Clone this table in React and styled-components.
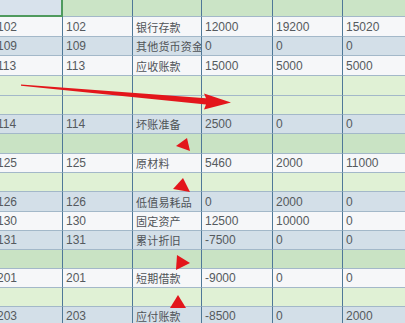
import React from "react";
import styled, { createGlobalStyle } from "styled-components";

const GlobalStyle = createGlobalStyle`
  html, body {
    margin: 0;
    padding: 0;
    background: #ffffff;
    overflow: hidden;
  }
  body {
    font-family: "Liberation Sans", "Noto Sans CJK SC", sans-serif;
  }
`;

const rowColors = {
  head: "#cbe4c6",
  white: "#f6f7f9",
  blue: "#d3dfe8",
  green: "#c9e3c4",
  lime: "#e0f1d5",
};

const Stage = styled.div`
  position: relative;
  width: 405px;
  height: 323px;
  overflow: hidden;
`;

const Sheet = styled.div`
  display: flex;
  flex-direction: column;
  margin-left: -6px;
`;

const Row = styled.div`
  display: grid;
  grid-template-columns: 69px 70px 69px 71px 70px 70px;
  height: ${({ h }) => h}px;
  background: ${({ tone }) => rowColors[tone]};
`;

const Cell = styled.div`
  box-sizing: border-box;
  border-right: 1px solid #4f7898;
  border-bottom: 1px solid #a3b8c9;
  padding-left: ${({ first }) => (first ? "3px" : "3px")};
  display: flex;
  align-items: center;
  font-size: 12px;
  color: #555a5e;
  white-space: nowrap;
  overflow: hidden;
`;

const Name = styled.span`
  font-family: "Noto Sans CJK SC", sans-serif;
  font-size: 11px;
  color: #4f5357;
  letter-spacing: 0.2px;
`;

const Picked = styled(Cell)`
  background: #d8e2ec;
  border-right: 2px solid #4f9a5e;
  border-bottom: 2px solid #4f9a5e;
`;

const Overlay = styled.svg`
  position: absolute;
  left: 0;
  top: 0;
  pointer-events: none;
`;

const rows = [
  { h: 17, tone: "head", head: true },
  { h: 20, tone: "white", d: ["102", "102", "银行存款", "12000", "19200", "15020"] },
  { h: 19, tone: "blue", d: ["109", "109", "其他货币资金", "0", "0", "0"] },
  { h: 20, tone: "white", d: ["113", "113", "应收账款", "15000", "5000", "5000"] },
  { h: 20, tone: "lime" },
  { h: 19, tone: "lime" },
  { h: 19, tone: "blue", d: ["114", "114", "坏账准备", "2500", "0", "0"] },
  { h: 20, tone: "green" },
  { h: 19, tone: "white", d: ["125", "125", "原材料", "5460", "2000", "11000"] },
  { h: 19, tone: "lime" },
  { h: 20, tone: "blue", d: ["126", "126", "低值易耗品", "0", "2000", "0"] },
  { h: 19, tone: "white", d: ["130", "130", "固定资产", "12500", "10000", "0"] },
  { h: 19, tone: "blue", d: ["131", "131", "累计折旧", "-7500", "0", "0"] },
  { h: 19, tone: "green" },
  { h: 19, tone: "white", d: ["201", "201", "短期借款", "-9000", "0", "0"] },
  { h: 19, tone: "lime" },
  { h: 19, tone: "blue", d: ["203", "203", "应付账款", "-8500", "0", "2000"] },
];

const Arrows = () => (
  <Overlay width="405" height="323" viewBox="0 0 405 323">
    <g fill="#e3161b">
      <polygon points="21,84.4 206,98.2 204,93.5 231,102.5 204,109.5 206,104.6 21,85.8" />
      <polygon points="176,146 187,138 190,151" />
      <polygon points="173,189 183,178 190,192" />
      <polygon points="177,255 190,263 176,270" />
      <polygon points="178,295 170,308 186,308" />
    </g>
  </Overlay>
);

export default function App() {
  return (
    <>
      <GlobalStyle />
      <Stage>
        <Sheet>
          {rows.map((r, i) => (
            <Row key={i} h={r.h} tone={r.tone}>
              {Array.from({ length: 6 }).map((_, c) => {
                if (r.head && c === 0) return <Picked key={c} />;
                const v = r.d ? r.d[c] : "";
                return (
                  <Cell key={c} first={c === 0}>
                    {c === 2 && v ? <Name>{v}</Name> : v}
                  </Cell>
                );
              })}
            </Row>
          ))}
        </Sheet>
        <Arrows />
      </Stage>
    </>
  );
}
